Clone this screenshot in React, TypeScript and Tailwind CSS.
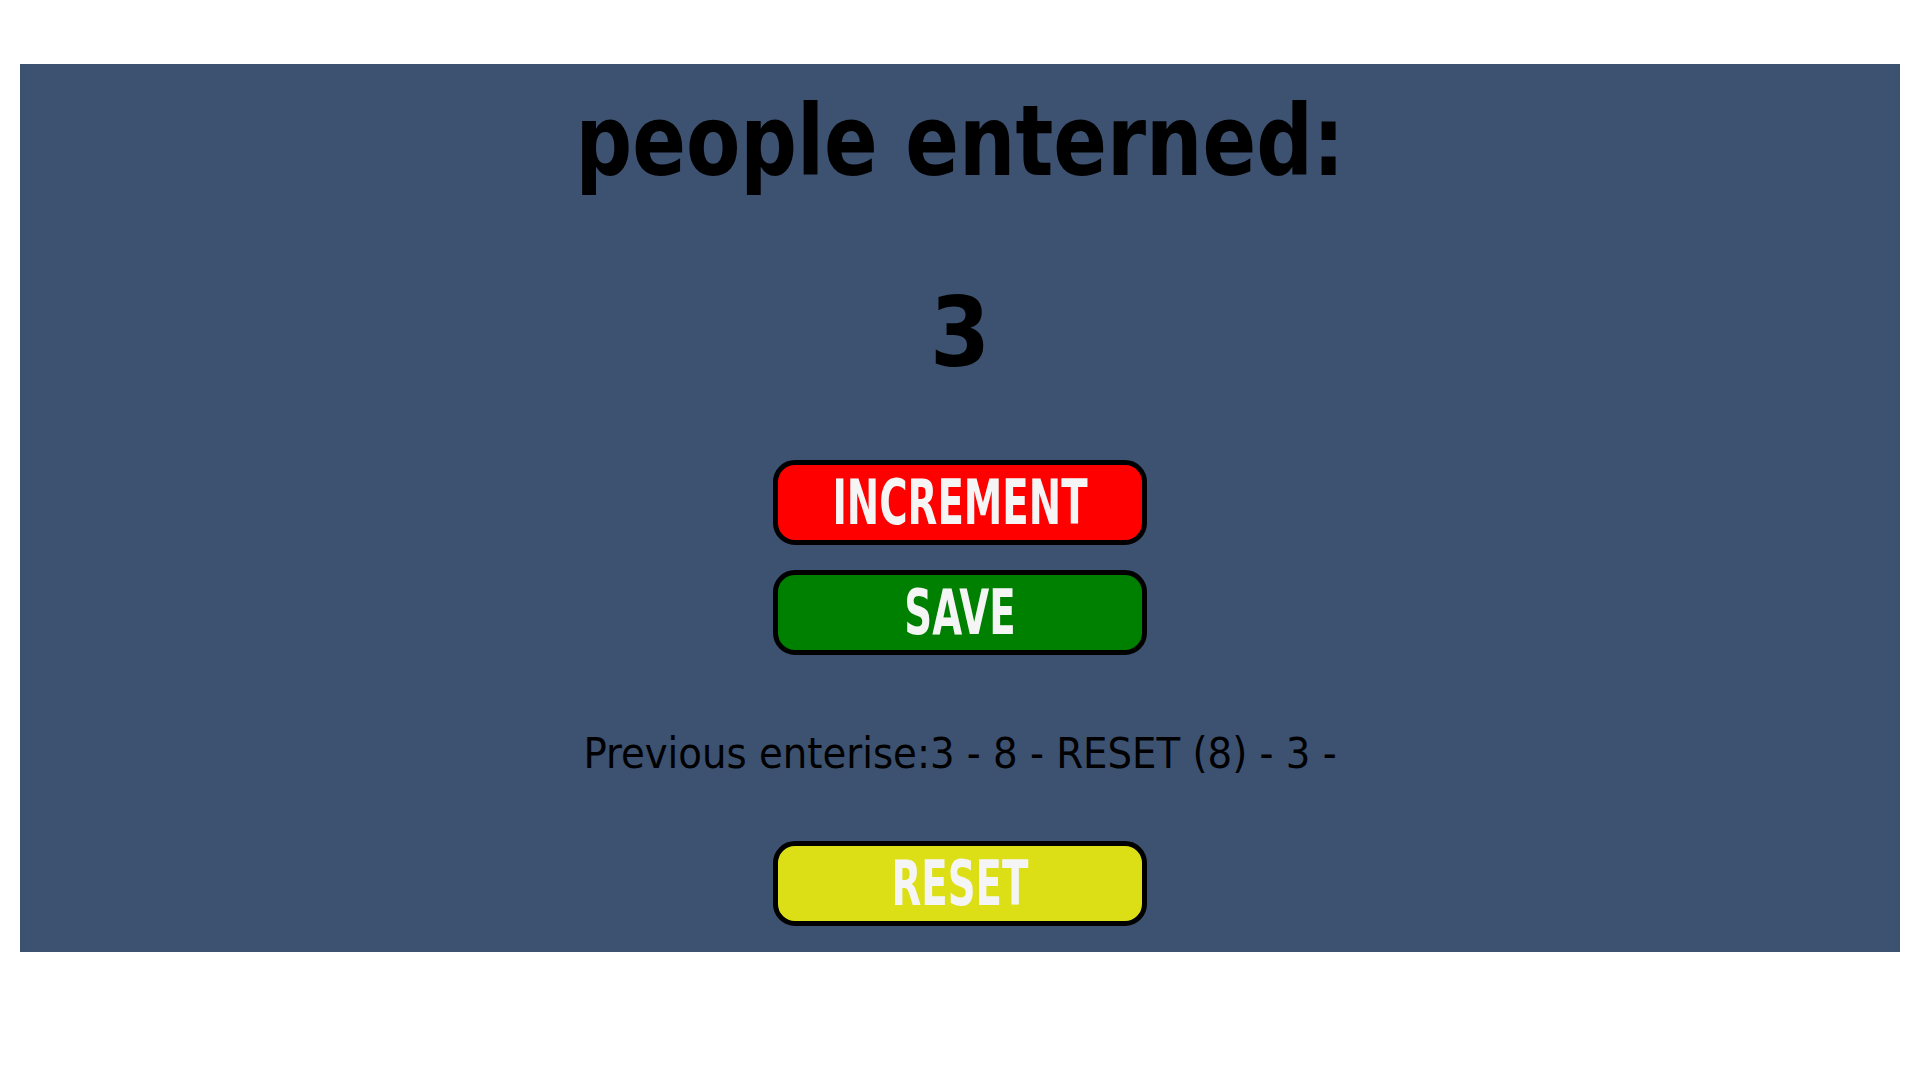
export default function App() {
  const history = "Previous enterise:3 - 8 - RESET (8) - 3 -";

  return (
    <div className="min-h-screen w-full bg-white pt-[64px] pl-[20px] pr-[20px]">
      <div className="flex h-[888px] w-full flex-col items-center bg-[#3d5170] font-['Comic_Sans_MS','DejaVu_Sans_Condensed','DejaVu_Sans',sans-serif] text-black">
        {/* title + counter */}
        <h1 className="mt-[22px] inline-block scale-y-[1.12] text-[88px] font-bold leading-[110px]">
          people enterned:
        </h1>
        <div className="mt-[82px] text-[96px] font-bold leading-[110px]">3</div>

        {/* actions */}
        <div className="mt-[72px] flex flex-col gap-[25px]">
          <button className="flex h-[85px] w-[374px] items-center justify-center rounded-[22px] border-[5px] border-black bg-[#ff0000]">
            <span className="inline-block scale-y-[1.45] font-['Liberation_Sans_Narrow','DejaVu_Sans_Condensed',sans-serif] text-[43px] font-bold leading-none text-[#f5f5f5]">
              INCREMENT
            </span>
          </button>
          <button className="flex h-[85px] w-[374px] items-center justify-center rounded-[22px] border-[5px] border-black bg-[#008000]">
            <span className="inline-block scale-y-[1.45] font-['Liberation_Sans_Narrow','DejaVu_Sans_Condensed',sans-serif] text-[43px] font-bold leading-none text-[#f5f5f5]">
              SAVE
            </span>
          </button>
        </div>

        <p className="mt-[73px] text-[43px] leading-[50px]">{history}</p>

        <button className="mt-[63px] flex h-[85px] w-[374px] items-center justify-center rounded-[22px] border-[5px] border-black bg-[#dcdf15]">
          <span className="inline-block scale-y-[1.45] font-['Liberation_Sans_Narrow','DejaVu_Sans_Condensed',sans-serif] text-[43px] font-bold leading-none text-[#f5f5f5]">
            RESET
          </span>
        </button>
      </div>
    </div>
  );
}
